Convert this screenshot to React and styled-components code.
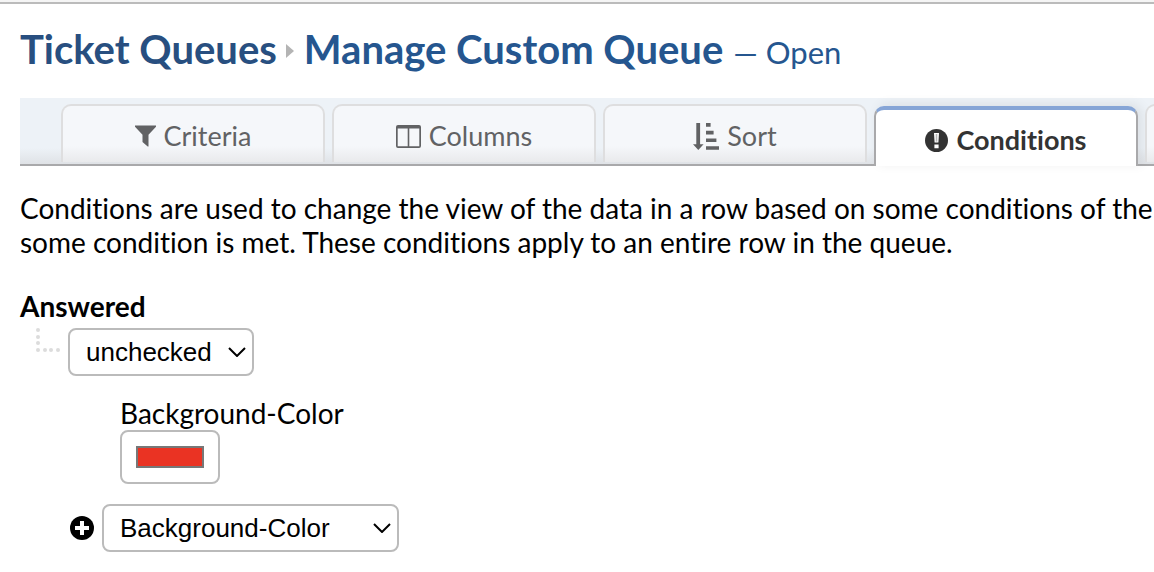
import React from "react";
import styled, { createGlobalStyle, css } from "styled-components";

const GlobalStyle = createGlobalStyle`
  * {
    box-sizing: border-box;
  }

  body {
    margin: 0;
    overflow-x: hidden;
    background: #fff;
    color: #000;
    font-family: Lato, "Liberation Sans", sans-serif;
    font-size: 28px;
    line-height: 34px;
    font-variant-ligatures: none;
  }
`;

const Page = styled.main`
  border-top: 2px solid #f5f5f5;
`;

const Content = styled.div`
  border-top: 2px solid #bbb;
  padding: 20px 0 20px 20px;
  overflow: hidden;
`;

const Title = styled.h1`
  display: flex;
  align-items: baseline;
  margin: 0 0 21px;
  font-size: 40px;
  line-height: 50px;
  font-weight: 700;
  color: #25568f;
  white-space: nowrap;
`;

const TitleLink = styled.a`
  color: #284f80;
  text-decoration: none;
`;

const Caret = styled.svg`
  align-self: center;
  width: 8px;
  height: 14px;
  margin: 0 10px 0 9px;
  fill: #b4b4b4;
`;

const Subtitle = styled.small`
  margin-left: 10px;
  font-size: 31px;
  font-weight: 400;
`;

const TabBar = styled.div`
  display: flex;
  align-items: flex-start;
  gap: 7px;
  height: 68px;
  padding: 6px 0 0 41px;
  border-bottom: 2px solid #a9a9ab;
  background: linear-gradient(to top, #dfe2e6, #edf2f7 16px);
`;

const Tab = styled.button`
  display: flex;
  flex: 0 0 264px;
  align-items: center;
  justify-content: center;
  gap: 8px;
  height: 58px;
  padding: 4px 0 0;
  border: 2px solid #dededf;
  border-bottom: 0;
  border-radius: 10px 10px 0 0;
  background: linear-gradient(to top, #e9eaec, #f5f7fa 16px);
  color: #616264;
  font-family: inherit;
  font-size: 27px;
  line-height: 34px;
  font-variant-ligatures: none;

  ${({ $active }) =>
    $active &&
    css`
      height: 60px;
      margin-top: 2px;
      border-color: #a9a9ab;
      border-top: 4px solid #86a5d6;
      background: #fff;
      box-shadow: 4px -2px 12px rgba(0, 0, 0, 0.08);
      color: #333;
      font-weight: 700;
    `}
`;

const Icon = styled.svg`
  flex: none;
  fill: currentColor;
`;

const Description = styled.p`
  margin: 25px 0 30px;
  white-space: nowrap;
`;

const Field = styled.label`
  display: block;
  margin-bottom: ${({ $bold }) => ($bold ? 5 : 0)}px;
  font-weight: ${({ $bold }) => ($bold ? 700 : 400)};
`;

const Row = styled.div`
  display: flex;
  align-items: center;
`;

const Branch = styled.svg`
  align-self: flex-start;
  width: 26px;
  height: 26px;
  margin: 0 8px 0 14px;
  fill: #dcdcdc;
`;

const SelectBox = styled.span`
  display: grid;
  align-items: center;
  width: ${({ $width }) => $width}px;

  > * {
    grid-area: 1 / 1;
  }

  svg {
    justify-self: end;
    margin-right: 8px;
    pointer-events: none;
  }
`;

const Select = styled.select`
  appearance: none;
  width: 100%;
  height: 48px;
  padding: 0 16px;
  border: 2px solid #bbb;
  border-radius: 8px;
  background: #fff;
  color: #000;
  font-family: "Liberation Sans", Arial, sans-serif;
  font-size: 26px;
`;

const Property = styled.div`
  margin: 20px 0 20px 100px;
`;

const ColorInput = styled.input`
  appearance: none;
  display: block;
  width: 100px;
  height: 54px;
  padding: 14px;
  border: 2px solid #bbb;
  border-radius: 8px;
  background: #fff;

  &::-webkit-color-swatch-wrapper {
    padding: 0;
  }

  &::-webkit-color-swatch {
    box-sizing: border-box;
    height: 22px;
    border: 2px solid #777;
    border-radius: 0;
  }
`;

const AddRow = styled(Row)`
  gap: 8px;
  margin-left: 50px;
`;

const AddButton = styled.button`
  display: flex;
  padding: 0;
  border: 0;
  background: none;
  color: #000;
`;

const FilterIcon = () => (
  <Icon width="21" height="22" viewBox="0 0 21 22" aria-hidden="true">
    <path d="M0 .5h21v1.3l-7.5 8V21.5h-.8L7.5 17V9.8L0 1.8z" />
  </Icon>
);

const ColumnsIcon = () => (
  <Icon width="25" height="23" viewBox="0 0 25 23" aria-hidden="true">
    <path
      fillRule="evenodd"
      d="M2 0h21a2 2 0 0 1 2 2v19a2 2 0 0 1-2 2H2a2 2 0 0 1-2-2V2a2 2 0 0 1 2-2zM1.7 3.5v17.8h10V3.5zm11.6 0v17.8h10V3.5z"
    />
  </Icon>
);

const SortIcon = () => (
  <Icon width="26" height="27" viewBox="0 0 26 27" aria-hidden="true">
    <path d="M3.3 0h3.8v21.2H10.6L5.3 27 0 21.2h3.3zM13 0h4.6v3.8H13zM13 7.8h7.6v3.6H13zM13 15.4h10.4V19H13zM13 23.2h13v3.6H13z" />
  </Icon>
);

const ExclamationIcon = () => (
  <Icon width="23" height="23" viewBox="0 0 23 23" aria-hidden="true">
    <circle cx="11.5" cy="11.5" r="11.5" />
    <path d="M9 4h5l-.6 9.5H9.6zM9.4 15.4h4.2v3.8H9.4z" fill="#fff" />
    <path d="M10.7 5h1.6v7.6h-1.6z" opacity=".35" />
  </Icon>
);

const PlusIcon = () => (
  <Icon width="24" height="24" viewBox="0 0 24 24" aria-hidden="true">
    <circle cx="12" cy="12" r="12" />
    <path d="M10 5h4v5h5v4h-5v5h-4v-5H5v-4h5z" fill="#fff" />
  </Icon>
);

const Chevron = () => (
  <svg width="18" height="10" viewBox="0 0 18 10" aria-hidden="true">
    <path d="M1 1l8 8 8-8" fill="none" stroke="#000" strokeWidth="2" />
  </svg>
);

const tabs = [
  { label: "Criteria", icon: FilterIcon },
  { label: "Columns", icon: ColumnsIcon },
  { label: "Sort", icon: SortIcon },
  { label: "Conditions", icon: ExclamationIcon, active: true },
];

const App = () => {
  return (
    <Page>
      <GlobalStyle />
      <Content>
        <Title>
          <TitleLink href="#queues">Ticket Queues</TitleLink>
          <Caret viewBox="0 0 8 14" aria-hidden="true">
            <path d="M0 0l8 7-8 7z" />
          </Caret>
          Manage Custom Queue
          <Subtitle>— Open</Subtitle>
        </Title>

        <TabBar role="tablist">
          {tabs.map(({ label, icon: TabIcon, active }) => (
            <Tab
              key={label}
              type="button"
              role="tab"
              aria-selected={Boolean(active)}
              $active={active}
            >
              <TabIcon />
              {label}
            </Tab>
          ))}
          <Tab type="button" role="tab" aria-label="More" />
        </TabBar>

        <Description>
          Conditions are used to change the view of the data in a row based on
          some conditions of the
          <br />
          some condition is met. These conditions apply to an entire row in the
          queue.
        </Description>

        <Field $bold htmlFor="answered">
          Answered
        </Field>
        <Row>
          <Branch viewBox="0 0 26 26" aria-hidden="true">
            {[2, 9, 15, 22].map((y) => (
              <circle key={y} cx="4" cy={y} r="2" />
            ))}
            {[11, 17, 24].map((x) => (
              <circle key={x} cx={x} cy="22" r="2" />
            ))}
          </Branch>
          <SelectBox $width={186}>
            <Select id="answered" defaultValue="unchecked">
              <option>unchecked</option>
              <option>checked</option>
            </Select>
            <Chevron />
          </SelectBox>
        </Row>

        <Property>
          <Field htmlFor="color">Background-Color</Field>
          <ColorInput id="color" type="color" defaultValue="#ea3323" />
        </Property>

        <AddRow>
          <AddButton type="button" aria-label="Add property">
            <PlusIcon />
          </AddButton>
          <SelectBox $width={297}>
            <Select aria-label="Property" defaultValue="Background-Color">
              <option>Background-Color</option>
            </Select>
            <Chevron />
          </SelectBox>
        </AddRow>
      </Content>
    </Page>
  );
};

export default App;
